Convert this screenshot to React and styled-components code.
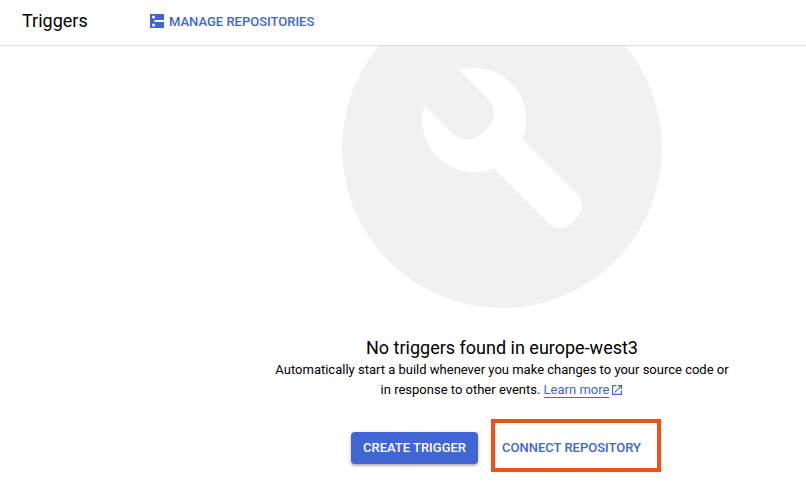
import React from "react";
import styled, { createGlobalStyle } from "styled-components";

const GlobalStyle = createGlobalStyle`
  * { box-sizing: border-box; }
  body {
    margin: 0;
    background: #fff;
    color: #000;
    font-family: Roboto, "Liberation Sans", sans-serif;
    overflow: hidden;
  }
`;

const Page = styled.div`
  display: flex;
  flex-direction: column;
  height: 100vh;
  overflow: hidden;
`;

const Header = styled.header`
  display: flex;
  flex: none;
  align-items: center;
  height: 46px;
  padding: 0 22px 3px;
  border-bottom: 1px solid #dedede;
`;

const Title = styled.h1`
  width: 128px;
  margin: 0;
  font-size: 18px;
  font-weight: 400;
  line-height: 24px;
`;

const HeaderAction = styled.button`
  display: flex;
  align-items: center;
  gap: 5px;
  padding: 0;
  border: 0;
  background: none;
  color: #4066d4;
  font: 500 13px/20px Roboto, sans-serif;
  white-space: nowrap;

  svg { flex: none; }
`;

const ActionLabel = styled.span`
  padding-top: 1px;
`;

const Main = styled.main`
  display: flex;
  flex: 1;
  min-height: 0;
  flex-direction: column;
  align-items: center;
  padding-left: 198px;
  overflow: hidden;
`;

const Illustration = styled.svg`
  flex: none;
  width: 320px;
  height: 320px;
  margin-top: -58px;
`;

const Heading = styled.h2`
  margin: 28px 0 0;
  font-size: 18px;
  font-weight: 400;
  line-height: 24px;
  white-space: nowrap;
`;

const Description = styled.p`
  width: 470px;
  margin: 0;
  font-size: 13px;
  line-height: 20px;
  text-align: center;
`;

const Link = styled.a`
  color: #4066d4;
  border-bottom: 1px solid #4066d4;
`;

const ExternalIcon = styled.svg`
  width: 10px;
  height: 10px;
  margin: 0 1px 0 3px;
  vertical-align: -1px;
`;

const Actions = styled.div`
  display: flex;
  flex: none;
  align-items: center;
  gap: 13px;
  margin-top: 19px;
  padding-left: 8px;
`;

const PrimaryButton = styled.button`
  width: 127px;
  height: 32px;
  margin-top: 4px;
  padding: 0;
  border: 0;
  border-radius: 4px;
  background: #4066d4;
  color: #fff;
  font: 500 13px/32px Roboto, sans-serif;
  box-shadow: 0 2px 2px rgba(0, 0, 0, 0.2), 0 1px 4px rgba(0, 0, 0, 0.16);
  white-space: nowrap;
`;

const HighlightFrame = styled.div`
  display: flex;
  align-items: center;
  width: 170px;
  height: 53px;
  padding: 4px 0 0 7px;
  border: 4px solid #f15018;
`;

const TextButton = styled.button`
  padding: 0;
  border: 0;
  background: none;
  color: #4066d4;
  font: 500 13px/20px Roboto, sans-serif;
  white-space: nowrap;
`;

function RepositoriesIcon() {
  return (
    <svg width="14" height="14" viewBox="0 0 14 14">
      <path fill="#4066d4" d="M0 0h14v6H0zM0 8h14v6H0z" />
      <path fill="#4066d4" d="M0 5h4.5v4H0z" />
      <circle cx="3.5" cy="3" r="1.5" fill="#fff" />
      <circle cx="3.5" cy="11" r="1.5" fill="#fff" />
    </svg>
  );
}

function WrenchIllustration() {
  return (
    <Illustration viewBox="342 -12 320 320">
      <circle cx="502" cy="148" r="160" fill="#f1f1f1" />
      <path
        fill="#fff"
        d="M459.2 70.2A52 52 0 0 1 522.5 139.3L577 194Q582 200 582 206.5Q582 212.5 577.5 217.5L571.5 223.5Q566.5 228 560.5 228Q554 228 548.5 223.5L494 168.3A52 52 0 0 1 424.4 105.2L453.3 134Q459.5 139.7 467.7 139.7Q475 139.7 481.5 134L488 127.5Q493.8 121 493.8 113.5Q493.8 105.5 488 99Z"
      />
    </Illustration>
  );
}

export default function App() {
  return (
    <Page>
      <GlobalStyle />
      <Header>
        <Title>Triggers</Title>
        <HeaderAction>
          <RepositoriesIcon />
          <ActionLabel>MANAGE REPOSITORIES</ActionLabel>
        </HeaderAction>
      </Header>
      <Main>
        <WrenchIllustration />
        <Heading>No triggers found in europe-west3</Heading>
        <Description>
          Automatically start a build whenever you make changes to your source code or
          <br />
          in response to other events. <Link>Learn more</Link>
          <ExternalIcon viewBox="0 0 10 10" fill="none" stroke="#4066d4" strokeWidth="1.1">
            <path d="M4.5.6H.6v8.8h8.8V5.5M6 .6h3.4V4M9.2.8 2.7 7.3" />
          </ExternalIcon>
        </Description>
        <Actions>
          <PrimaryButton>CREATE TRIGGER</PrimaryButton>
          <HighlightFrame>
            <TextButton>CONNECT REPOSITORY</TextButton>
          </HighlightFrame>
        </Actions>
      </Main>
    </Page>
  );
}
